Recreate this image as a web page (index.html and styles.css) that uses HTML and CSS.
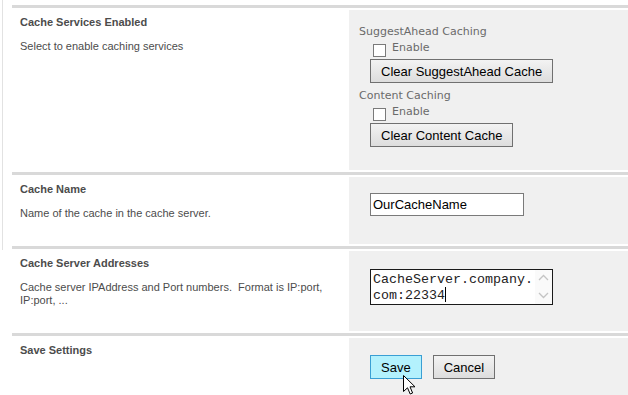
FILE: index.html
```html
<!DOCTYPE html>
<html>
<head>
    <title>Cache Settings</title>
    <meta name="viewport" content="width=device-width, initial-scale=1.0">
    <link rel="stylesheet" href="styles.css">
</head>
<body>
    <div class="page">
        <div class="rail"></div>
        <div class="form">
            <div class="section">
                <div class="label-col">
                    <h3 class="title">Cache Services Enabled</h3>
                    <p class="desc">Select to enable caching services</p>
                </div>
                <div class="field-col field-cache">
                    <div class="group-label">SuggestAhead Caching</div>
                    <label class="check"><input type="checkbox"> Enable</label>
                    <button class="btn btn-first">Clear SuggestAhead Cache</button>
                    <div class="group-label">Content Caching</div>
                    <label class="check"><input type="checkbox"> Enable</label>
                    <button class="btn">Clear Content Cache</button>
                </div>
            </div>

            <div class="section">
                <div class="label-col">
                    <h3 class="title">Cache Name</h3>
                    <p class="desc">Name of the cache in the cache server.</p>
                </div>
                <div class="field-col field-name">
                    <input class="text-input" type="text" value="OurCacheName">
                </div>
            </div>

            <div class="section">
                <div class="label-col">
                    <h3 class="title">Cache Server Addresses</h3>
                    <p class="desc">Cache server IPAddress and Port numbers.&nbsp; Format is IP:port,<br>IP:port, ...</p>
                </div>
                <div class="field-col field-servers">
                    <div class="textbox">
                        <div class="textbox-text">CacheServer.company.<br>com:22334<span class="caret"></span></div>
                        <div class="scroll">
                            <svg width="11" height="7" viewBox="0 0 11 7"><path d="M1 6 L5.5 1.5 L10 6" fill="none" stroke="#c4c4c4" stroke-width="1.3"/></svg>
                            <svg width="11" height="7" viewBox="0 0 11 7"><path d="M1 1 L5.5 5.5 L10 1" fill="none" stroke="#c4c4c4" stroke-width="1.3"/></svg>
                        </div>
                    </div>
                </div>
            </div>

            <div class="section">
                <div class="label-col">
                    <h3 class="title">Save Settings</h3>
                </div>
                <div class="field-col field-save">
                    <div class="actions">
                        <button class="btn btn-save">Save</button>
                        <button class="btn">Cancel</button>
                        <svg class="pointer" width="13" height="20" viewBox="0 0 13 20">
                            <path d="M0.5 0.5 L0.5 16.5 L4.5 12.8 L7.2 19 L9.6 18 L7 11.8 L12 11.8 Z" fill="#fff" stroke="#000" stroke-width="1" stroke-linejoin="miter"/>
                        </svg>
                    </div>
                </div>
            </div>
        </div>
    </div>
</body>
</html>
```

FILE: styles.css
```css
body {
    margin: 0;
    background: #fff;
    overflow: hidden;
}
.page {
    display: flex;
    align-items: flex-start;
}
.rail {
    width: 1px;
    height: 250px;
    margin-left: 2px;
    background: #e2e2e2;
}
.form {
    flex: 1;
    margin-left: 9px;
    padding-top: 5px;
}
.section {
    display: flex;
    border-top: 3px solid #d9d9d9;
    padding: 2px 0;
}
.label-col {
    width: 337px;
    padding: 5px 0 0 8px;
    box-sizing: border-box;
    font-family: "Liberation Sans", Arial, sans-serif;
    font-size: 11px;
    color: #4c4c4c;
}
.title {
    margin: 0;
    font-size: 11px;
    line-height: 14px;
    font-weight: bold;
    color: #4c4c4c;
}
.desc {
    margin: 11px 0 0;
    line-height: 13px;
}
.field-col {
    flex: 1;
    background: #f0f0f0;
    padding-left: 21px;
}
.field-cache {
    padding-top: 14px;
    padding-bottom: 23px;
}
.field-name {
    padding-top: 16px;
    padding-bottom: 28px;
}
.field-servers {
    padding-top: 18px;
    padding-bottom: 26px;
}
.field-save {
    padding-top: 17px;
    padding-bottom: 20px;
}
.group-label {
    margin-left: -11px;
    font-family: "DejaVu Sans", Verdana, sans-serif;
    font-size: 11px;
    line-height: 16px;
    color: #6a6a6a;
}
.check {
    display: flex;
    align-items: flex-start;
    height: 19px;
    font-family: "DejaVu Sans", Verdana, sans-serif;
    font-size: 11px;
    line-height: 16px;
    color: #6a6a6a;
}
.check input {
    appearance: none;
    width: 13px;
    height: 13px;
    margin: 4px 6px 2px 3px;
    border: 1px solid #7a7a7a;
    background: #fff;
    box-sizing: border-box;
}
.btn {
    display: block;
    height: 24px;
    padding: 0 10px;
    border: 1px solid #707070;
    border-radius: 0;
    background: linear-gradient(#f3f3f3, #dddddd);
    font-family: "Liberation Sans", Arial, sans-serif;
    font-size: 13px;
    color: #000;
}
.btn-first {
    margin-bottom: 5px;
}
.text-input {
    display: block;
    width: 154px;
    height: 23px;
    margin: 0;
    padding: 0 2px;
    box-sizing: border-box;
    border: 1px solid #7a7a7a;
    background: #fff;
    font-family: "Liberation Sans", Arial, sans-serif;
    font-size: 13px;
    color: #000;
}
.textbox {
    display: flex;
    width: 183px;
    height: 36px;
    box-sizing: border-box;
    border: 1px solid #1a1a1a;
    background: #fff;
}
.textbox-text {
    flex: 1;
    padding: 2px 0 0 2px;
    font-family: "Liberation Mono", "Courier New", monospace;
    font-size: 13.33px;
    line-height: 15px;
    color: #222;
}
.caret {
    display: inline-block;
    width: 1px;
    height: 15px;
    background: #000;
    vertical-align: -3px;
}
.scroll {
    width: 17px;
    display: flex;
    flex-direction: column;
    justify-content: space-between;
    align-items: center;
    padding: 4px 0 5px;
    background: #fafafa;
}
.actions {
    position: relative;
    display: flex;
    gap: 11px;
}
.btn-save {
    background: #b3f1fd;
    border-color: #3a9fd4;
}
.pointer {
    position: absolute;
    left: 33px;
    top: 20px;
}
```
